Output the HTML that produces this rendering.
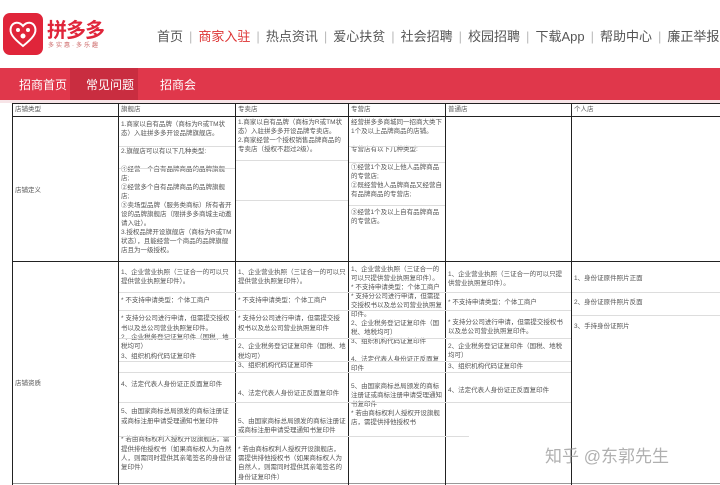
<!DOCTYPE html>
<html><head><meta charset="utf-8"><style>
*{margin:0;padding:0;box-sizing:border-box}
body{width:720px;height:485px;overflow:hidden;background:#fff;position:relative;font-family:"Liberation Sans","Noto Sans CJK SC",sans-serif}
.a{position:absolute}
.nav{top:26px;font-size:13px;color:#555;white-space:nowrap}
.sep{color:#bbb;padding:0 6px}
.t{position:absolute;font-size:6.5px;line-height:9px;color:#555;overflow:hidden}
.v{position:absolute;width:1px;background:#222;top:103px;height:382px}
.h{position:absolute;height:1px;background:#222;left:12px;width:708px}
.hl{position:absolute;height:1px;background:#ddd}
</style></head><body>
<div class="a" style="left:3px;top:13px;width:40px;height:42px;background:#e0253a;border-radius:7px"></div>
<svg class="a" style="left:7px;top:18px" width="32" height="32" viewBox="0 0 32 32"><path d="M16 28 C6 20 2 15 4 9 C6 4 12 3 16 8 C20 3 26 4 28 9 C30 15 26 20 16 28Z" fill="none" stroke="#fff" stroke-width="2"/><circle cx="11" cy="12" r="2" fill="#fff"/><circle cx="21" cy="12" r="2" fill="#fff"/><circle cx="16" cy="18" r="2.5" fill="#fff"/></svg>
<div class="a" style="left:47px;top:14px;font-size:20px;font-weight:bold;color:#e0253a;letter-spacing:-1px">拼多多</div>
<div class="a" style="left:48px;top:40px;font-size:6px;color:#c66;letter-spacing:2px">多实惠·多乐趣</div>
<div class="a nav" style="left:157px">首页<span class="sep">|</span><span style="color:#d33">商家入驻</span><span class="sep">|</span>热点资讯<span class="sep">|</span>爱心扶贫<span class="sep">|</span>社会招聘<span class="sep">|</span>校园招聘<span class="sep">|</span>下载App<span class="sep">|</span>帮助中心<span class="sep">|</span>廉正举报</div>
<div class="a" style="left:0;top:68px;width:720px;height:32px;background:#e0374b"></div>
<div class="a" style="left:70px;top:68px;width:68px;height:32px;background:#c92d40"></div>
<div class="a" style="left:19px;top:76px;font-size:12px;color:#fff">招商首页</div>
<div class="a" style="left:86px;top:76px;font-size:12px;color:#fff">常见问题</div>
<div class="a" style="left:160px;top:76px;font-size:12px;color:#fff">招商会</div>
<div class="a" style="left:0;top:100px;width:720px;height:3px;background:#f7e4e7"></div>

<div class="h" style="top:103px"></div><div class="h" style="top:116px"></div><div class="h" style="top:261px"></div><div class="h" style="top:483px;background:#999"></div>
<div class="v" style="left:12px"></div><div class="v" style="left:118px"></div><div class="v" style="left:235px"></div><div class="v" style="left:348px"></div><div class="v" style="left:445px"></div><div class="v" style="left:571px"></div>

<div class="t" style="left:15px;top:105px">店铺类型</div>
<div class="t" style="left:121px;top:105px">旗舰店</div>
<div class="t" style="left:238px;top:105px">专卖店</div>
<div class="t" style="left:351px;top:105px">专营店</div>
<div class="t" style="left:448px;top:105px">普通店</div>
<div class="t" style="left:574px;top:105px">个人店</div>

<div class="t" style="left:15px;top:186px">店铺定义</div>
<div class="t" style="left:121px;top:120px;width:112px">1.商家以自有品牌（商标为R或TM状态）入驻拼多多开设品牌旗舰店。<br><br>2.旗舰店可以有以下几种类型:<br><br>①经营一个自有品牌商品的品牌旗舰店;<br>②经营多个自有品牌商品的品牌旗舰店;<br>③卖场型品牌（服务类商标）所有者开设的品牌旗舰店（限拼多多商城主动邀请入驻）。<br>3.授权品牌开设旗舰店（商标为R或TM状态），且能经营一个商品的品牌旗舰店且为一级授权。</div>
<div class="t" style="left:238px;top:118px;width:108px">1.商家以自有品牌（商标为R或TM状态）入驻拼多多开设品牌专卖店。<br>2.商家经营一个授权销售品牌商品的专卖店（授权不超过2级）。</div>
<div class="t" style="left:351px;top:118px;width:93px">经营拼多多商城同一招商大类下1个及以上品牌商品的店铺。<br><br>专营店有以下几种类型:<br><br>①经营1个及以上他人品牌商品的专营店;<br>②既经营他人品牌商品又经营自有品牌商品的专营店;<br><br>③经营1个及以上自有品牌商品的专营店。</div>

<div class="t" style="left:15px;top:379px">店铺资质</div>
<div class="t" style="left:121px;top:268px;width:112px;line-height:9.3px">1、企业营业执照（三证合一的可以只提供营业执照复印件）。<br><br>* 不支持申请类型：个体工商户<br><br>* 支持分公司进行申请，但需提交授权书以及总公司营业执照复印件。<br>2、企业税务登记证复印件（国税、地税均可）<br>3、组织机构代码证复印件<br><br><br>4、法定代表人身份证正反面复印件<br><br><br>5、由国家商标总局颁发的商标注册证或商标注册申请受理通知书复印件<br><br>* 若由商标权利人授权开设旗舰店，需提供排他授权书（如果商标权人为自然人，则需同时提供其亲笔签名的身份证复印件）</div>
<div class="t" style="left:238px;top:268px;width:108px;line-height:9.3px">1、企业营业执照（三证合一的可以只提供营业执照复印件）。<br><br>* 不支持申请类型：个体工商户<br><br>* 支持分公司进行申请，但需提交授权书以及总公司营业执照复印件<br><br>2、企业税务登记证复印件（国税、地税均可）<br>3、组织机构代码证复印件<br><br><br>4、法定代表人身份证正反面复印件<br><br><br>5、由国家商标总局颁发的商标注册证或商标注册申请受理通知书复印件<br><br>* 若由商标权利人授权开设旗舰店，需提供排他授权书（如果商标权人为自然人，则需同时提供其亲笔签名的身份证复印件）</div>
<div class="t" style="left:351px;top:265px;width:93px">1、企业营业执照（三证合一的可以只提供营业执照复印件）。<br>* 不支持申请类型：个体工商户<br>* 支持分公司进行申请，但需提交授权书以及总公司营业执照复印件。<br>2、企业税务登记证复印件（国税、地税均可）<br>3、组织机构代码证复印件<br><br>4、法定代表人身份证正反面复印件<br><br>5、由国家商标总局颁发的商标注册证或商标注册申请受理通知书复印件<br>* 若由商标权利人授权开设旗舰店，需提供排他授权书</div>
<div class="t" style="left:448px;top:270px;width:120px">1、企业营业执照（三证合一的可以只提供营业执照复印件）。</div>
<div class="t" style="left:448px;top:298px;width:120px">* 不支持申请类型：个体工商户</div>
<div class="t" style="left:448px;top:318px;width:120px">* 支持分公司进行申请，但需提交授权书以及总公司营业执照复印件。</div>
<div class="t" style="left:448px;top:342px;width:120px">2、企业税务登记证复印件（国税、地税均可）</div>
<div class="t" style="left:448px;top:362px;width:120px">3、组织机构代码证复印件</div>
<div class="t" style="left:448px;top:386px;width:120px">4、法定代表人身份证正反面复印件</div>
<div class="t" style="left:574px;top:274px;width:120px">1、身份证原件照片正面</div>
<div class="t" style="left:574px;top:298px;width:120px">2、身份证原件照片反面</div>
<div class="t" style="left:574px;top:322px;width:120px">3、手持身份证照片</div>

<div class="hl" style="left:119px;top:146px;width:116px"></div><div class="hl" style="left:119px;top:168px;width:116px"></div>
<div class="hl" style="left:236px;top:160px;width:112px"></div><div class="hl" style="left:236px;top:200px;width:112px"></div>
<div class="hl" style="left:349px;top:146px;width:96px"></div><div class="hl" style="left:349px;top:162px;width:96px"></div><div class="hl" style="left:349px;top:205px;width:96px"></div>
<div class="hl" style="left:119px;top:292px;width:452px"></div><div class="hl" style="left:119px;top:310px;width:452px"></div><div class="hl" style="left:119px;top:338px;width:452px"></div><div class="hl" style="left:119px;top:361px;width:452px"></div><div class="hl" style="left:119px;top:372px;width:452px"></div><div class="hl" style="left:119px;top:402px;width:452px"></div><div class="hl" style="left:119px;top:436px;width:350px"></div>
<div class="hl" style="left:572px;top:292px;width:148px"></div><div class="hl" style="left:572px;top:315px;width:148px"></div>

<div class="a" style="left:545px;top:442px;font-size:17px;color:rgba(150,150,150,0.75);white-space:nowrap">知乎 @东郭先生</div>
</body></html>
